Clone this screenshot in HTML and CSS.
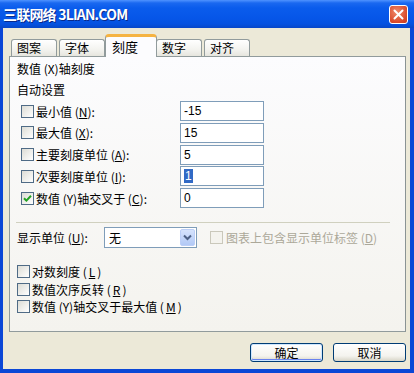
FILE: index.html
```html
<!DOCTYPE html>
<html lang="zh-CN">
<head>
    <meta charset="UTF-8" />
    <title>坐标轴格式</title>
    <link rel="stylesheet" href="styles.css">
</head>
<body>

<div class="window">
    <div class="titlebar">
        <span class="title">三联网络 3LIAN.COM</span>
        <span class="close">
            <svg width="11" height="11" viewBox="0 0 11 11"><path d="M1.5 1.5 L9.5 9.5 M9.5 1.5 L1.5 9.5" stroke="#fff" stroke-width="2" stroke-linecap="round"/></svg>
        </span>
    </div>

    <div class="client">
        <div class="tabs">
            <span class="tab">图案</span>
            <span class="tab">字体</span>
            <span class="tab active">刻度</span>
            <span class="tab">数字</span>
            <span class="tab">对齐</span>
        </div>

        <div class="panel">
            <div class="heading">数值 (X)轴刻度</div>
            <div class="subheading">自动设置</div>

            <div class="rows">
                <div class="row">
                    <span class="check"></span>
                    <label class="row-label">最小值 (<u>N</u>):</label>
                    <span class="field">-15</span>
                </div>
                <div class="row">
                    <span class="check"></span>
                    <label class="row-label">最大值 (<u>X</u>):</label>
                    <span class="field">15</span>
                </div>
                <div class="row">
                    <span class="check"></span>
                    <label class="row-label">主要刻度单位 (<u>A</u>):</label>
                    <span class="field">5</span>
                </div>
                <div class="row">
                    <span class="check"></span>
                    <label class="row-label">次要刻度单位 (<u>I</u>):</label>
                    <span class="field"><span class="selected">1</span></span>
                </div>
                <div class="row">
                    <span class="check checked">
                        <svg width="9" height="9" viewBox="0 0 9 9"><path d="M1 4.2 L3.4 6.6 L8 1.8" fill="none" stroke="#21a121" stroke-width="2"/></svg>
                    </span>
                    <label class="row-label">数值 (Y)轴交叉于 (<u>C</u>):</label>
                    <span class="field">0</span>
                </div>
            </div>

            <div class="separator"></div>

            <div class="unit-row">
                <label class="unit-label">显示单位 (<u>U</u>):</label>
                <span class="combo">
                    <span class="combo-text">无</span>
                    <span class="combo-btn">
                        <svg width="9" height="7" viewBox="0 0 9 7"><path d="M1 1.5 L4.5 5 L8 1.5" fill="none" stroke="#4d6185" stroke-width="2"/></svg>
                    </span>
                </span>
                <span class="check disabled"></span>
                <span class="disabled-label">图表上包含显示单位标签 (<u>D</u>)</span>
            </div>

            <div class="options">
                <div class="option"><span class="check"></span>对数刻度 (<u>L</u>)</div>
                <div class="option"><span class="check"></span>数值次序反转 (<u>R</u>)</div>
                <div class="option"><span class="check"></span>数值 (Y)轴交叉于最大值 (<u>M</u>)</div>
            </div>
        </div>

        <div class="buttons">
            <button class="btn default">确定</button>
            <button class="btn">取消</button>
        </div>
    </div>
</div>

</body>
</html>
```

FILE: styles.css
```css
body {
    margin: 0;
    font-family: "Noto Sans CJK SC", "Liberation Sans", sans-serif;
    font-size: 12px;
    color: #000;
}
.window {
    width: 414px;
    height: 373px;
    background: #0b47d6;
    display: flex;
    flex-direction: column;
    box-sizing: border-box;
    padding-bottom: 4px;
}
.titlebar {
    height: 28px;
    flex: none;
    display: flex;
    align-items: center;
    justify-content: space-between;
    padding: 0 6px 0 3px;
    background: linear-gradient(#4f93ff 0, #1a68f0 3px, #0a5cec 8px, #0656e8 18px, #0552e0 24px, #0747c8 28px);
}
.title {
    color: #fff;
    font-weight: bold;
    font-size: 14px;
    letter-spacing: -0.8px;
    text-shadow: 1px 1px 0 #0a2a8a;
}
.close {
    width: 19px;
    height: 19px;
    box-sizing: border-box;
    border: 1px solid #fff;
    border-radius: 3px;
    background: radial-gradient(circle at 40% 35%, #f08a6c, #d8492a 70%, #c23a1e);
    display: flex;
    align-items: center;
    justify-content: center;
}
.client {
    flex: 1;
    margin: 0 4px 0 3px;
    background: #ece9d8;
    padding: 6px 4px 0 6px;
    display: flex;
    flex-direction: column;
}
.tabs {
    display: flex;
    align-items: flex-end;
    height: 22px;
    padding-left: 2px;
    position: relative;
    z-index: 1;
}
.tab {
    height: 17px;
    line-height: 16px;
    box-sizing: border-box;
    padding: 0 9px 0 5px;
    margin-right: 2px;
    border: 1px solid #919b9c;
    border-bottom: none;
    border-radius: 3px 3px 0 0;
    background: linear-gradient(#ffffff, #f3f3ef 60%, #e6e5de);
    width: 46px;
}
.tab.active {
    height: 23px;
    line-height: 19px;
    margin: 0 0 -1px -2px;
    width: 52px;
    padding-left: 6px;
    font-size: 13px;
    background: #fcfcfe;
    border-top: 3px solid #f5b342;
    border-radius: 4px 4px 0 0;
}
.tab.active + .tab { margin-left: -1px; }
.panel {
    height: 276px;
    box-sizing: border-box;
    border: 1px solid #919b9c;
    border-right-color: #8a9394;
    background: linear-gradient(#fcfcfe, #f4f3ee);
    padding: 5px 8px 0 7px;
}
.heading {
    height: 14px;
    line-height: 14px;
}
.subheading {
    height: 14px;
    line-height: 14px;
    margin-top: 7px;
}
.rows {
    margin-top: 4px;
    padding-left: 4px;
    display: flex;
    flex-direction: column;
    gap: 1.8px;
}
.row {
    display: flex;
    align-items: center;
    height: 20px;
}
.check {
    width: 13px;
    height: 13px;
    flex: none;
    box-sizing: border-box;
    border: 1px solid #4f6b86;
    background: linear-gradient(135deg, #dcdcd5, #fff);
    display: inline-flex;
    align-items: center;
    justify-content: center;
}
.check.disabled {
    border-color: #cac8bb;
    background: #f4f3ee;
}
.row-label {
    margin-left: 2px;
    width: 144px;
}
.field {
    width: 84px;
    height: 20px;
    box-sizing: border-box;
    border: 1px solid #7f9db9;
    background: #fff;
    padding: 0 3px;
    line-height: 18px;
    font-family: "Liberation Sans", sans-serif;
    font-size: 12px;
}
.selected {
    background: #316ac5;
    color: #fff;
    padding: 0 1px;
}
.separator {
    margin: 14px 7px 0 -1px;
    border-top: 1px solid #d0d0bf;
}
.unit-row {
    display: flex;
    align-items: center;
    margin-top: 4px;
    height: 21px;
}
.unit-label {
    width: 87px;
}
.combo {
    width: 93px;
    height: 21px;
    box-sizing: border-box;
    border: 1px solid #7f9db9;
    background: #fff;
    display: flex;
    align-items: stretch;
    margin-right: 13px;
}
.combo-text {
    flex: 1;
    padding-left: 4px;
    line-height: 19px;
    font-size: 12px;
}
.combo-btn {
    width: 15px;
    margin: 1px;
    border-radius: 2px;
    background: linear-gradient(#d6e3fc, #b2c9f6);
    border: 1px solid #bccff7;
    box-sizing: border-box;
    display: flex;
    align-items: center;
    justify-content: center;
}
.disabled-label {
    margin-left: 3px;
    color: #aca899;
}
.options {
    margin-top: 15px;
    display: flex;
    flex-direction: column;
}
.option {
    height: 17.5px;
    display: flex;
    align-items: center;
    gap: 2px;
}
.buttons {
    display: flex;
    justify-content: flex-end;
    gap: 10px;
    margin-top: 11px;
}
.btn {
    width: 73px;
    height: 19px;
    padding: 0;
    border: 1px solid #003c74;
    border-radius: 3px;
    background: linear-gradient(#ffffff, #f4f3ee 70%, #d8d5c7);
    font-family: "Noto Sans CJK SC", sans-serif;
    font-size: 12px;
    line-height: 15px;
    color: #000;
}
.btn.default {
    box-shadow: inset 0 0 0 1px #cee7ff, inset 0 -1px 0 1px #6982ee;
}
```
